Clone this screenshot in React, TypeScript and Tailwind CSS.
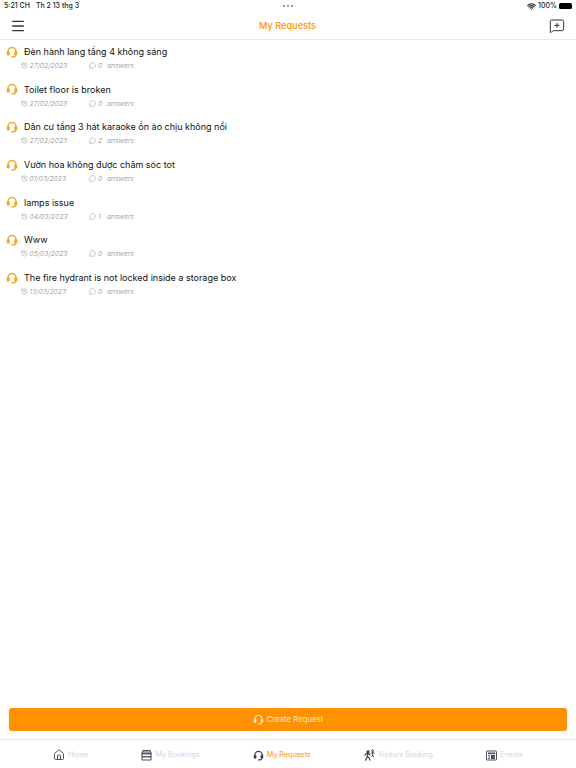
import { History, Home, Menu, MessageCircle, MessageSquarePlus, Wifi } from 'lucide-react'

const requests = [
  { title: 'Đèn hành lang tầng 4 không sáng', date: '27/02/2023', answers: 0 },
  { title: 'Toilet floor is broken', date: '27/02/2023', answers: 0 },
  { title: 'Dân cư tầng 3 hát karaoke ồn ào chịu không nổi', date: '27/02/2023', answers: 2 },
  { title: 'Vườn hoa không được chăm sóc tot', date: '01/03/2023', answers: 0 },
  { title: 'lamps issue', date: '04/03/2023', answers: 1 },
  { title: 'Www', date: '05/03/2023', answers: 0 },
  { title: 'The fire hydrant is not locked inside a storage box', date: '13/03/2023', answers: 0 },
]

function HeadsetIcon({ className, size = 12, strokeWidth = 3 }: { className?: string; size?: number; strokeWidth?: number }) {
  return (
    <svg width={size} height={size} viewBox="0 0 24 24" fill="none" stroke="currentColor" strokeWidth={strokeWidth} strokeLinecap="round" className={className}>
      <path d="M4 13v-2a8 8 0 0 1 16 0v2" />
      <rect x="1.500" y="10.500" width="6" height="8.500" rx="2.500" fill="currentColor" stroke="none" />
      <rect x="16.500" y="10.500" width="6" height="8.500" rx="2.500" fill="currentColor" stroke="none" />
      <path d="M19 18.500c0 2-1.600 3-3.500 3H12" />
    </svg>
  )
}

function BookingsIcon() {
  return (
    <svg width="11" height="12" viewBox="0 0 22 24" fill="none" stroke="#4b5563" strokeWidth="2.200" strokeLinejoin="round">
      <path d="M4 3h14l2.500 6.500H1.500z" fill="#9ca3af" />
      <rect x="2" y="9.500" width="18" height="6" />
      <rect x="2" y="15.500" width="18" height="6.500" rx="1.500" />
    </svg>
  )
}

function VisitorsIcon() {
  return (
    <svg width="11" height="12" viewBox="0 0 12 13" fill="none" stroke="#374151" strokeWidth="1.300" strokeLinecap="round" strokeLinejoin="round">
      <circle cx="4.400" cy="3" r="1.100" fill="#374151" />
      <path d="M1 6.500l2-1.800h2l1.400 1.800M4.200 4.800L3.600 8.500 1.600 12.200M3.800 8.500l2 1.200.6 2.500" />
      <circle cx="9.400" cy="1.800" r="1" strokeWidth="1" />
      <path d="M7.600 5l1.600-1.600 1.800 1M9.400 3.600v3l1 1.600M9.400 6.600L8.600 8" strokeWidth="1" />
    </svg>
  )
}

function EventsIcon() {
  return (
    <svg width="11" height="11" viewBox="0 0 22 22" fill="none" stroke="#4b5563" strokeWidth="2">
      <rect x="1" y="2" width="20" height="18" rx="1" />
      <rect x="4" y="5" width="14" height="3.500" fill="#4b5563" stroke="none" />
      <rect x="10" y="10" width="8" height="8" fill="#4b5563" stroke="none" />
      <path d="M4 11h4M4 14h4M4 17h4" strokeWidth="1.500" />
    </svg>
  )
}

function Tab({ label, icon, active }: { label: string; icon: React.ReactNode; active?: boolean }) {
  return (
    <div className="flex items-center gap-[3px]">
      {icon}
      <span className={`text-[7.200px] ${active ? 'text-[#ff9500]' : 'text-[#d1d5db]'}`}>{label}</span>
    </div>
  )
}

export default function App() {
  return (
    <div className="flex h-[768px] w-[576px] flex-col overflow-hidden bg-white font-['Inter',sans-serif] text-black">
      {/* Status bar */}
      <div className="relative flex h-[12px] items-center justify-between pr-[4px] pl-1 text-[7px] font-medium text-[#222]">
        <div className="flex gap-[6px]">
          <span>5:21 CH</span>
          <span>Th 2 13 thg 3</span>
        </div>
        <div className="absolute top-[5px] left-[283px] flex gap-[2px]">
          <span className="h-[2px] w-[2px] rounded-full bg-[#777]" />
          <span className="h-[2px] w-[2px] rounded-full bg-[#777]" />
          <span className="h-[2px] w-[2px] rounded-full bg-[#777]" />
        </div>
        <div className="flex items-center gap-[2px]">
          <Wifi size={9} strokeWidth={3} />
          <span>100%</span>
          <div className="h-[6px] w-[13px] rounded-[1.500px] bg-black" />
        </div>
      </div>

      {/* Header */}
      <div className="flex h-[28px] items-center justify-between border-b border-[#e8e8e8] pt-[1px] pr-[11px] pl-[10px]">
        <Menu size={16} strokeWidth={2} className="text-[#333]" />
        <span className="text-[9.200px] font-medium text-[#ff9500]">My Requests</span>
        <MessageSquarePlus size={16} strokeWidth={1.500} className="text-[#333]" />
      </div>

      {/* List */}
      <div className="flex-1 pt-[4px]">
        {requests.map((r) => (
          <div key={r.title} className="h-[37.700px] pl-[6px]">
            <div className="flex items-center gap-[6px]">
              <HeadsetIcon className="text-[#f5a623]" />
              <span className="text-[9px] leading-[15px] text-[#111]">{r.title}</span>
            </div>
            <div className="flex items-center pt-[1px] pl-[15px] text-[6.800px] leading-[11px] font-light text-[#8a8a8a] italic">
              <div className="flex w-[68px] items-center gap-[1.500px]">
                <History size={7} strokeWidth={1.500} />
                <span>{r.date}</span>
              </div>
              <MessageCircle size={7} strokeWidth={1.500} />
              <span className="ml-[2px] w-[9px]">{r.answers}</span>
              <span>answers</span>
            </div>
          </div>
        ))}
      </div>

      {/* Create button */}
      <div className="px-[9px] pb-[8px]">
        <div className="flex h-[23px] items-center justify-center gap-[3px] rounded-[3px] bg-[#ff9000] text-[7.800px] text-[#ffe9c9]">
          <HeadsetIcon size={11} strokeWidth={2.400} />
          <span>Create Request</span>
        </div>
      </div>

      {/* Tab bar */}
      <div className="flex h-[29px] items-center justify-evenly border-t border-[#e8e8e8] pt-[2px]">
        <Tab label="Home" icon={<Home size={12} className="text-[#4b5563]" />} />
        <Tab label="My Bookings" icon={<BookingsIcon />} />
        <Tab label="My Requests" active icon={<HeadsetIcon size={11} strokeWidth={2.400} className="text-[#374151]" />} />
        <Tab label="Visitors Booking" icon={<VisitorsIcon />} />
        <Tab label="Events" icon={<EventsIcon />} />
      </div>
    </div>
  )
}
